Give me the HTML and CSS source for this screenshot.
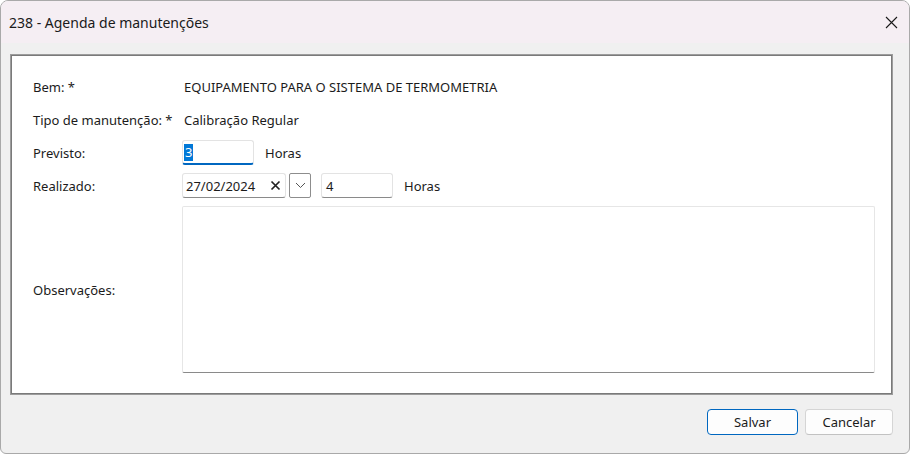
FILE: index.html
```
<!DOCTYPE html>
<html lang="pt">
<head>
  <meta charset="UTF-8">
  <title>238 - Agenda de manutenções</title>
  <link rel="stylesheet" href="styles.css">
</head>
<body>
  <div class="window">
    <div class="titlebar">
      <span class="title">238 - Agenda de manutenções</span>
      <button class="close" aria-label="Fechar">
        <svg width="13" height="13" viewBox="0 0 13 13"><path d="M1 1L12 12M12 1L1 12" stroke="#1a1a1a" stroke-width="1.1" fill="none"/></svg>
      </button>
    </div>

    <div class="content">
      <div class="panel">
        <div class="form">
          <div class="label">Bem: *</div>
          <div class="value value-bem">EQUIPAMENTO PARA O SISTEMA DE TERMOMETRIA</div>

          <div class="label">Tipo de manutenção: *</div>
          <div class="value">Calibração Regular</div>

          <div class="label">Previsto:</div>
          <div class="field-row">
            <div class="input input-focus input-hours"><span class="selected">3</span></div>
            <span class="unit">Horas</span>
          </div>

          <div class="label">Realizado:</div>
          <div class="field-row">
            <div class="input input-date">
              <span>27/02/2024</span>
              <svg class="clear" width="11" height="11" viewBox="0 0 11 11"><path d="M1.5 1.5L9.5 9.5M9.5 1.5L1.5 9.5" stroke="#222" stroke-width="1.7" fill="none"/></svg>
            </div>
            <div class="drop">
              <svg width="11" height="7" viewBox="0 0 11 7"><path d="M1 1L5.5 5.5L10 1" stroke="#555" stroke-width="1" fill="none"/></svg>
            </div>
            <div class="input input-real">4</div>
            <span class="unit">Horas</span>
          </div>

          <div class="label">Observações:</div>
          <div class="textarea"></div>
        </div>
      </div>

      <div class="footer">
        <button class="btn btn-primary">Salvar</button>
        <button class="btn">Cancelar</button>
      </div>
    </div>
  </div>
</body>
</html>
```

FILE: styles.css
```
body {
  margin: 0;
  background: #ffffff;
  font-family: "Noto Sans", "Open Sans", sans-serif;
  font-size: 13px;
  color: #1b1b1b;
}

.window {
  width: 910px;
  height: 454px;
  box-sizing: border-box;
  border: 1px solid #a9a9a9;
  border-radius: 8px 8px 6px 6px;
  background: #f0f0f0;
  overflow: hidden;
  display: flex;
  flex-direction: column;
}

/* barra de titulo */
.titlebar {
  height: 42px;
  flex-shrink: 0;
  background: #f5eef3;
  display: flex;
  align-items: center;
  justify-content: space-between;
  padding: 0 10px 0 8px;
}

.title {
  font-size: 14px;
  color: #1a1a1a;
}

.close {
  border: none;
  background: none;
  padding: 0;
  width: 16px;
  height: 16px;
  display: flex;
  align-items: center;
  justify-content: center;
}

.content {
  flex: 1;
  padding: 11px 16px 0 9px;
  display: flex;
  flex-direction: column;
}

.panel {
  height: 341px;
  box-sizing: border-box;
  background: #fff;
  border: 1px solid #9c9c9c;
  box-shadow: inset 0 0 0 1px #7a7a7a;
  padding: 19px 17px 20px 22px;
}

.form {
  display: grid;
  grid-template-columns: 149px 1fr;
  grid-template-rows: 25px 25px 25px 25px 167px;
  row-gap: 8px;
  align-items: center;
}

.label {
  color: #1b1b1b;
}

.value-bem {
  padding-left: 6px;
}

.value {
  padding-left: 2px;
}

.field-row {
  display: flex;
  align-items: center;
  height: 25px;
}

.input {
  height: 25px;
  box-sizing: border-box;
  background: #fff;
  border: 1px solid #e3e3e3;
  border-bottom-color: #8a8a8a;
  border-radius: 3px;
  display: flex;
  align-items: center;
  padding: 0 4px;
}

.input-focus {
  border-bottom: 2px solid #0067c0;
}

.input-hours {
  width: 72px;
  padding-left: 1px;
}

.selected {
  background: #0078d7;
  color: #fff;
  padding: 0 1px;
  line-height: 17px;
}

.unit {
  margin-left: 11px;
}

.input-date {
  width: 104px;
  padding-left: 3px;
  justify-content: space-between;
  padding-right: 4px;
}

.drop {
  width: 22px;
  height: 25px;
  box-sizing: border-box;
  margin-left: 3px;
  border: 1px solid #8d8d8d;
  border-radius: 2px;
  background: #fff;
  display: flex;
  align-items: center;
  justify-content: center;
}

.input-real {
  width: 72px;
  margin-left: 10px;
}

.textarea {
  height: 167px;
  box-sizing: border-box;
  background: #fff;
  border: 1px solid #e6e6e6;
  border-bottom-color: #8a8a8a;
  border-radius: 2px;
}

/* botoes */
.footer {
  display: flex;
  justify-content: flex-end;
  gap: 7px;
  margin-top: 14px;
}

.btn {
  height: 26px;
  width: 88px;
  box-sizing: border-box;
  font-family: "Noto Sans", "Open Sans", sans-serif;
  font-size: 13px;
  color: #1b1b1b;
  background: #fdfdfd;
  border: 1px solid #d5d5d5;
  border-bottom-color: #c2c2c2;
  border-radius: 4px;
}

.btn-primary {
  width: 91px;
  border: 1px solid #0067c0;
}
```
